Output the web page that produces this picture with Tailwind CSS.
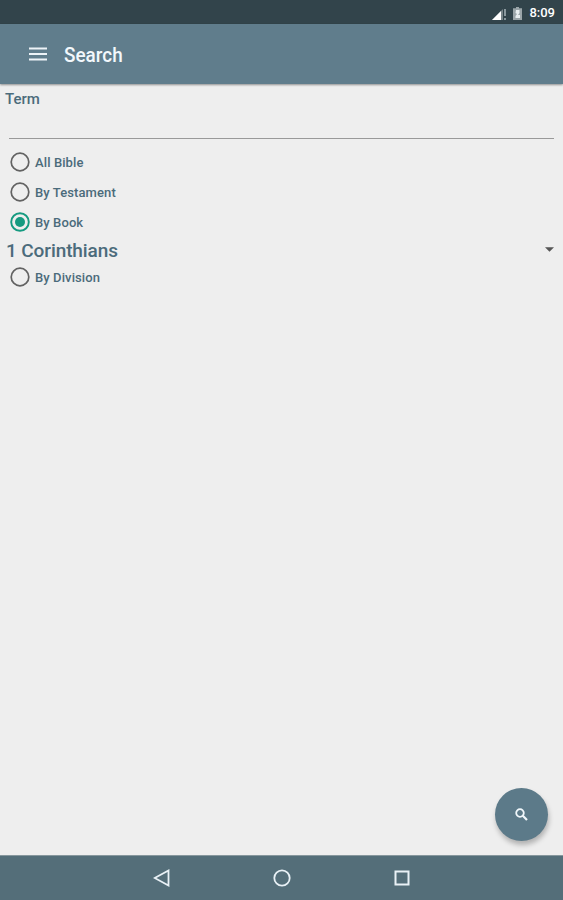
<!DOCTYPE html>
<html lang="en">
<head>
  <meta charset="UTF-8" />
  <meta name="viewport" content="width=device-width, initial-scale=1.0" />
  <title>Search</title>
  <script src="https://cdn.jsdelivr.net/npm/@tailwindcss/browser@4"></script>
</head>
<body class="bg-[#eeeeee] h-screen flex flex-col overflow-hidden font-[Roboto,sans-serif] text-[#4b6b7b]">
  <!-- Status bar -->
  <div class="h-6 shrink-0 bg-[#32444b] flex items-center justify-end pr-2 text-white">
    <svg class="w-[15px] h-3 mr-[6px] mt-[3px]" viewBox="0 0 15 12">
      <path d="M0 12L11 1V12Z" fill="#fff" fill-opacity=".35" />
      <path d="M0 12L9 3V12Z" fill="#fff" />
      <path d="M13 1V8M13 10V12" stroke="#b9c5c9" stroke-width="1.3" />
    </svg>
    <svg class="w-[9px] h-[13px] mr-[7px] mt-0.5" viewBox="0 0 9 13">
      <path d="M3 0H6V1.3H9V13H0V1.3H3Z" fill="#9ba5a9" />
      <path d="M3 3H6.5V6L5 8H7V11H2.500V9L4 7L2.500 6Z" fill="#e8eef0" />
    </svg>
    <span class="text-[13px] leading-6 mt-[2px] font-medium">8:09</span>
  </div>

  <!-- App bar -->
  <header class="h-[60px] shrink-0 bg-[#607d8c] flex items-center pl-[29px] pb-px shadow-[0_1px_2px_rgba(0,0,0,0.4)]">
    <button class="mr-[17px]" aria-label="Menu">
      <svg class="w-[18px] h-[14px] block mt-px" viewBox="0 0 18 14">
        <path d="M0 1.500H18M0 7H18M0 12.500H18" stroke="#edf3f7" stroke-width="2" />
      </svg>
    </button>
    <h1 class="text-[20px] font-medium text-[#f2f8fc] mt-[3px] origin-left scale-x-[0.945]">Search</h1>
  </header>

  <!-- Search form -->
  <main class="flex-1 relative pt-[6px]">
    <label for="term" class="block pl-[5px] text-[15px] leading-[18px] h-[19px] font-medium">Term</label>
    <div class="mx-[9px] h-[30px] border-b border-[#999999]">
      <input id="term" type="text" class="w-full h-full outline-none" />
    </div>

    <div class="pl-[10px] pt-2 text-[13px] font-medium">
      <label class="flex items-center h-[30px] gap-[5px]">
        <svg class="w-5 h-5" viewBox="0 0 20 20"><circle cx="10" cy="10" r="8.800" fill="none" stroke="#626262" stroke-width="1.700" /></svg>
        <span class="mt-0.5 tracking-[0.1px]">All Bible</span>
      </label>
      <label class="flex items-center h-[30px] gap-[5px]">
        <svg class="w-5 h-5" viewBox="0 0 20 20"><circle cx="10" cy="10" r="8.800" fill="none" stroke="#626262" stroke-width="1.700" /></svg>
        <span class="mt-0.5 tracking-[0.1px]">By Testament</span>
      </label>
      <label class="flex items-center h-[30px] gap-[5px]">
        <svg class="w-5 h-5" viewBox="0 0 20 20">
          <circle cx="10" cy="10" r="8.800" fill="none" stroke="#159a80" stroke-width="1.900" />
          <circle cx="10" cy="10" r="5" fill="#159a80" />
        </svg>
        <span class="mt-0.5 tracking-[0.1px]">By Book</span>
      </label>
    </div>

    <div class="h-[25px] pl-[6px] pr-[9px] flex items-center justify-between">
      <span class="text-[19px] leading-5 font-medium mt-[3px] tracking-[-0.1px]">1 Corinthians</span>
      <svg class="w-[9px] h-[5px]" viewBox="0 0 10 5"><path d="M0 0H10L5 5Z" fill="#555" /></svg>
    </div>

    <label class="flex items-center h-[30px] gap-[5px] pl-[10px] text-[13px] font-medium">
      <svg class="w-5 h-5" viewBox="0 0 20 20"><circle cx="10" cy="10" r="8.800" fill="none" stroke="#626262" stroke-width="1.700" /></svg>
      <span class="mt-0.5 tracking-[0.1px]">By Division</span>
    </label>

    <!-- Floating search button -->
    <button class="absolute right-[15px] bottom-[14px] size-[53px] rounded-full bg-[#5c7a89] flex items-center justify-center shadow-[1px_4px_5px_rgba(0,0,0,0.25)]" aria-label="Search">
      <svg class="w-[13px] h-[13px]" viewBox="0 0 13 13" fill="none" stroke="#f0f7fb">
        <circle cx="5" cy="5" r="3.800" stroke-width="1.800" />
        <path d="M7.800 7.800L12 12" stroke-width="2.200" />
      </svg>
    </button>
  </main>

  <!-- Navigation bar -->
  <nav class="h-[45px] shrink-0 bg-[#546e79] border-t border-[#87979d] flex items-center justify-center gap-[103px]">
    <svg class="w-[17px] h-[18px]" viewBox="0 0 17 18"><path d="M1.700 9L15.500 1.500V16.500Z" fill="none" stroke="#e9f1f6" stroke-width="1.800" /></svg>
    <svg class="w-[18px] h-[18px]" viewBox="0 0 18 18"><circle cx="9" cy="9" r="7.700" fill="none" stroke="#e9f1f6" stroke-width="1.800" /></svg>
    <svg class="w-[17px] h-[17px]" viewBox="0 0 17 17"><rect x="1.500" y="1.500" width="13" height="13" fill="none" stroke="#e9f1f6" stroke-width="2" /></svg>
  </nav>
</body>
</html>
